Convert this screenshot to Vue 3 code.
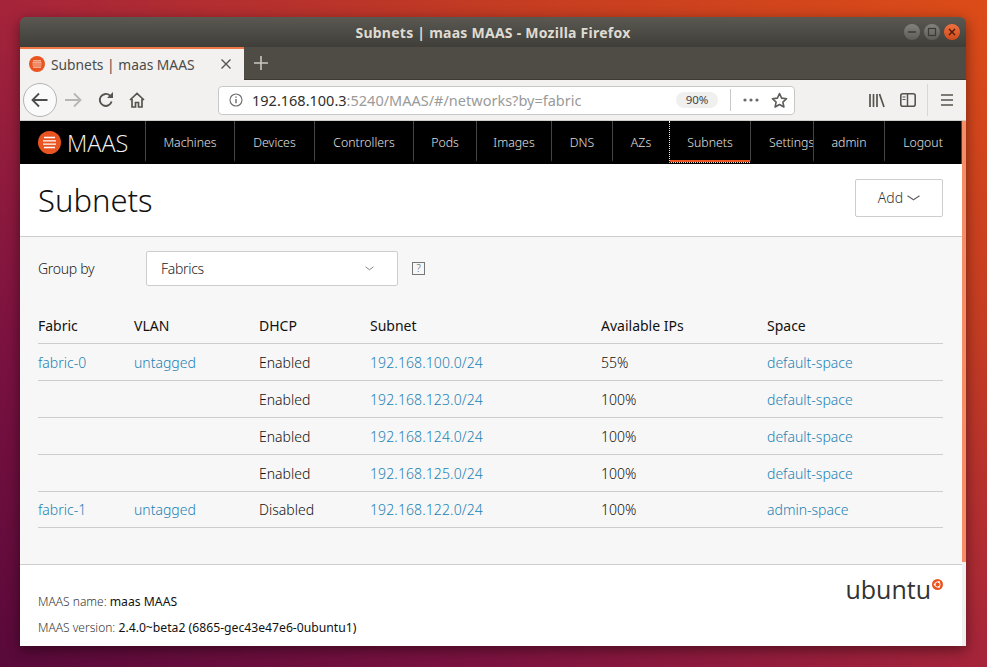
<template>
  <div class="desktop">
    <div class="window">
      <div class="titlebar">
        <span class="title">Subnets | maas MAAS - Mozilla Firefox</span>
        <div class="win-buttons">
          <span class="win-btn"><svg width="10" height="10" viewBox="0 0 10 10"><path d="M1 5h8" stroke="#3c3b37" stroke-width="1.4" /></svg></span>
          <span class="win-btn"><svg width="10" height="10" viewBox="0 0 10 10"><rect x="1.5" y="1.5" width="7" height="7" fill="none" stroke="#3c3b37" stroke-width="1.2" /></svg></span>
          <span class="win-btn close"><svg width="10" height="10" viewBox="0 0 10 10"><path d="M2 2l6 6M8 2l-6 6" stroke="#4a1a08" stroke-width="1.4" /></svg></span>
        </div>
      </div>

      <div class="tabbar">
        <div class="tab">
          <svg class="favicon" width="16" height="16" viewBox="0 0 16 16">
            <circle cx="8" cy="8" r="8" fill="#e95420" />
            <path d="M4 4.8h8M3.5 6.9h9M3.5 9h9M4 11.1h8" stroke="#f6c3ae" stroke-width="1.2" />
          </svg>
          <span class="tab-label">Subnets | maas MAAS</span>
          <svg class="tab-close" width="10" height="10" viewBox="0 0 10 10"><path d="M0.5 0.5l9 9M9.5 0.5l-9 9" stroke="#55544f" stroke-width="1.4" /></svg>
        </div>
        <svg class="new-tab" width="14" height="14" viewBox="0 0 14 14"><path d="M7 0v14M0 7h14" stroke="#c9c8c3" stroke-width="1.6" /></svg>
      </div>

      <div class="toolbar">
        <span class="back">
          <svg width="18" height="16" viewBox="0 0 18 16"><path d="M1.5 8h15M8 1.5L1.5 8 8 14.5" fill="none" stroke="#4d4d4d" stroke-width="1.8" /></svg>
        </span>
        <svg class="forward" width="18" height="16" viewBox="0 0 18 16"><path d="M1 8h15M10 1.5L16.5 8 10 14.5" fill="none" stroke="#b5b5b3" stroke-width="1.8" /></svg>
        <svg class="reload" width="16" height="16" viewBox="0 0 16 16"><path d="M13.6 9.5A6 6 0 1 1 12 3.6" fill="none" stroke="#55554f" stroke-width="1.9" /><path d="M9 6h6V0z" fill="#55554f" /></svg>
        <svg class="home" width="16" height="16" viewBox="0 0 16 16"><path d="M1 8l7-6.5L15 8M3 7v8h3.5v-4.500h3V15H13V7" fill="none" stroke="#55554f" stroke-width="1.7" /></svg>

        <div class="urlbar">
          <svg width="14" height="14" viewBox="0 0 14 14"><circle cx="7" cy="7" r="6" fill="none" stroke="#6a6a68" stroke-width="1.1" /><path d="M7 6v4.200M7 3.400v1.400" stroke="#6a6a68" stroke-width="1.4" /></svg>
          <span class="url"><span class="host">192.168.100.3</span>:5240/MAAS/#/networks?by=fabric</span>
          <span class="zoom">90%</span>
          <span class="url-sep"></span>
          <svg class="dots" width="16" height="4" viewBox="0 0 16 4"><circle cx="2" cy="2" r="1.600" fill="#6a6a68" /><circle cx="8" cy="2" r="1.600" fill="#6a6a68" /><circle cx="14" cy="2" r="1.600" fill="#6a6a68" /></svg>
          <svg class="star" width="17" height="16" viewBox="0 0 17 16"><path d="M8.500 1.500l2.100 4.600 5 .6-3.700 3.400 1 4.900-4.400-2.500-4.400 2.500 1-4.900L1.400 6.700l5-.6z" fill="none" stroke="#5c5c5a" stroke-width="1.600" stroke-linejoin="round" /></svg>
        </div>

        <svg class="library" width="16" height="15" viewBox="0 0 16 15"><path d="M1 1v13M4.500 1v13M8 1v13M10.500 1l4.500 13" stroke="#55554f" stroke-width="1.700" fill="none" /></svg>
        <svg class="sidebar" width="16" height="14" viewBox="0 0 16 14"><rect x="0.800" y="0.800" width="14.400" height="12.400" rx="2" fill="none" stroke="#55554f" stroke-width="1.600" /><path d="M7.500 1v12" stroke="#55554f" stroke-width="1.500" /><path d="M2.500 4h3M2.500 6.500h3" stroke="#55554f" stroke-width="1.200" /></svg>
        <span class="tool-sep"></span>
        <svg class="menu" width="12" height="12" viewBox="0 0 12 12"><path d="M0 1h12M0 6h12M0 11h12" stroke="#55554f" stroke-width="1.600" /></svg>
      </div>

      <div class="page-wrap">
        <div class="page">
          <nav class="nav">
            <div class="brand">
              <svg width="23" height="23" viewBox="0 0 23 23">
                <circle cx="11.500" cy="11.500" r="11.500" fill="#e95420" />
                <path d="M6 6.500h11M5 9.800h13M5 13.200h13M6 16.500h11" stroke="#fff" stroke-width="1.300" />
              </svg>
              <span class="brand-name">MAAS</span>
            </div>
            <a
              v-for="item in navItems"
              :key="item.label"
              class="nav-item"
              :class="{ active: item.label === 'Subnets', clipped: item.label === 'Settings' }"
              :style="{ width: item.width + 'px' }"
            >
              {{ item.label }}
            </a>
          </nav>

          <header class="page-header">
            <h1>Subnets</h1>
            <button class="add-btn">
              Add
              <svg width="13" height="6" viewBox="0 0 13 6"><path d="M0.500 0.800L6.500 4.800 12.500 0.800" fill="none" stroke="#666" stroke-width="1.200" /></svg>
            </button>
          </header>

          <main class="content">
            <div class="group-row">
              <label>Group by</label>
              <div class="select">
                <span>Fabrics</span>
                <svg width="9" height="5" viewBox="0 0 9 5"><path d="M0.500 0.800L4.500 3.800 8.500 0.800" fill="none" stroke="#888" stroke-width="1" /></svg>
              </div>
              <span class="help">?</span>
            </div>

            <div class="table">
              <div class="row head">
                <span>Fabric</span>
                <span>VLAN</span>
                <span>DHCP</span>
                <span>Subnet</span>
                <span>Available IPs</span>
                <span>Space</span>
              </div>
              <div v-for="row in rows" :key="row.subnet" class="row">
                <a>{{ row.fabric }}</a>
                <a>{{ row.vlan }}</a>
                <span>{{ row.dhcp }}</span>
                <a class="subnet">{{ row.subnet }}</a>
                <span>{{ row.ips }}</span>
                <a>{{ row.space }}</a>
              </div>
            </div>
          </main>

          <footer class="footer">
            <div class="footer-text">
              <p>MAAS name: <b>maas MAAS</b></p>
              <p>MAAS version: <b>2.4.0~beta2 (6865-gec43e47e6-0ubuntu1)</b></p>
            </div>
            <div class="ubuntu">
              <span>ubuntu</span>
              <svg width="11" height="11" viewBox="0 0 11 11">
                <circle cx="5.500" cy="5.500" r="5.500" fill="#e95420" />
                <circle cx="5.500" cy="5.500" r="2.600" fill="none" stroke="#fff" stroke-width="1" />
                <circle cx="2.600" cy="5.500" r="0.900" fill="#fff" />
                <circle cx="7" cy="3" r="0.900" fill="#fff" />
                <circle cx="7" cy="8" r="0.900" fill="#fff" />
              </svg>
            </div>
          </footer>
        </div>
        <div class="scrollbar"><div class="thumb"></div></div>
      </div>
    </div>
  </div>
</template>

<script setup>
const navItems = [
  { label: "Machines", width: 89 },
  { label: "Devices", width: 80 },
  { label: "Controllers", width: 99 },
  { label: "Pods", width: 63 },
  { label: "Images", width: 75 },
  { label: "DNS", width: 61 },
  { label: "AZs", width: 57 },
  { label: "Subnets", width: 81 },
  { label: "Settings", width: 63 },
  { label: "admin", width: 71 },
  { label: "Logout", width: 77 },
];

const rows = [
  { fabric: "fabric-0", vlan: "untagged", dhcp: "Enabled", subnet: "192.168.100.0/24", ips: "55%", space: "default-space" },
  { fabric: "", vlan: "", dhcp: "Enabled", subnet: "192.168.123.0/24", ips: "100%", space: "default-space" },
  { fabric: "", vlan: "", dhcp: "Enabled", subnet: "192.168.124.0/24", ips: "100%", space: "default-space" },
  { fabric: "", vlan: "", dhcp: "Enabled", subnet: "192.168.125.0/24", ips: "100%", space: "default-space" },
  { fabric: "fabric-1", vlan: "untagged", dhcp: "Disabled", subnet: "192.168.122.0/24", ips: "100%", space: "admin-space" },
];
</script>

<style>
html,
body {
  margin: 0;
  height: 100%;
  overflow: hidden;
}
</style>

<style scoped>
.desktop {
  width: 987px;
  height: 667px;
  padding: 17px 21px 21px 20px;
  box-sizing: border-box;
  background: linear-gradient(to top right, #58093a 0%, #7c1240 25%, #a5243a 50%, #c43c22 75%, #dc4c18 100%);
  font-family: "Noto Sans", "Open Sans", sans-serif;
}

.window {
  height: 629px;
  display: flex;
  flex-direction: column;
  border-radius: 6px 6px 0 0;
  overflow: hidden;
  box-shadow: 0 4px 14px rgba(0, 0, 0, 0.45);
}

.titlebar {
  height: 30px;
  flex: none;
  position: relative;
  display: flex;
  align-items: center;
  justify-content: center;
  background: linear-gradient(#5a5851, #3f3e39);
}

.title {
  color: #dfdbd2;
  font-size: 14px;
  font-weight: 700;
  letter-spacing: 0.25px;
}

.win-buttons {
  position: absolute;
  right: 6px;
  top: 7px;
  display: flex;
  gap: 4px;
}

.win-btn {
  width: 16px;
  height: 16px;
  border-radius: 50%;
  background: linear-gradient(#84827c, #5e5c56);
  display: flex;
  align-items: center;
  justify-content: center;
}

.win-btn.close {
  background: linear-gradient(#f0703f, #d04a1a);
}

.tabbar {
  height: 33px;
  flex: none;
  display: flex;
  align-items: center;
  background: #4f4c45;
  box-sizing: border-box;
  border-bottom: 1px solid #3c3a35;
}

.tab {
  width: 224px;
  height: 33px;
  box-sizing: border-box;
  border-top: 2px solid #f07746;
  background: #f2f1ef;
  display: flex;
  align-items: center;
  padding: 0 0 1px 9px;
  margin-bottom: -1px;
}

.tab-label {
  margin-left: 6px;
  font-size: 13.800px;
  color: #4b4b49;
  flex: 1;
  white-space: nowrap;
}

.tab-close {
  margin-right: 13px;
}

.new-tab {
  margin-left: 10px;
}

.toolbar {
  height: 41px;
  flex: none;
  box-sizing: border-box;
  display: flex;
  align-items: center;
  background: #f2f1ef;
  border-bottom: 1px solid #cfcecb;
  padding-left: 3px;
}

.back {
  width: 32px;
  height: 32px;
  border: 1px solid #b3b3b1;
  border-radius: 50%;
  background: #fafafa;
  display: flex;
  align-items: center;
  justify-content: center;
}

.forward {
  margin-left: 7px;
}

.reload {
  margin-left: 16px;
}

.home {
  margin-left: 15px;
}

.urlbar {
  margin-left: 73px;
  width: 577px;
  height: 29px;
  box-sizing: border-box;
  display: flex;
  align-items: center;
  padding: 0 6px 0 10px;
  background: #fff;
  border: 1px solid #c8c8c6;
  border-radius: 4px;
}

.url {
  margin-left: 9px;
  flex: 1;
  font-size: 14.500px;
  color: #9a9a98;
  white-space: nowrap;
}

.host {
  color: #2f2f2e;
}

.zoom {
  width: 42px;
  height: 16px;
  line-height: 16px;
  margin-right: 12px;
  border-radius: 8px;
  background: #f0f0ef;
  color: #444;
  font-size: 11.500px;
  text-align: center;
}

.url-sep {
  width: 1px;
  height: 22px;
  background: #c8c8c6;
  margin-right: 12px;
}

.star {
  margin-left: 12px;
}

.library {
  margin-left: 74px;
}

.sidebar {
  margin-left: 15px;
}

.tool-sep {
  width: 1px;
  height: 32px;
  background: #d8d7d4;
  margin-left: 11px;
}

.menu {
  margin-left: 13px;
}

.page-wrap {
  flex: 1;
  min-height: 0;
  display: flex;
}

.page {
  width: 942px;
  display: flex;
  flex-direction: column;
}

.scrollbar {
  flex: 1;
  background: #f0f0f0;
}

.thumb {
  height: 441px;
  background: #f58e66;
}

.nav {
  height: 43px;
  flex: none;
  display: flex;
  background: #000;
  border-right: 1px solid #444;
  box-sizing: border-box;
}

.brand {
  width: 125px;
  flex: none;
  display: flex;
  align-items: center;
  padding-left: 18px;
  gap: 6px;
  box-sizing: border-box;
}

.brand-name {
  color: #f2f2f2;
  font-size: 23.500px;
  font-weight: 300;
  font-family: "Open Sans", sans-serif;
}

.nav-item {
  flex: none;
  height: 41px;
  box-sizing: border-box;
  padding-top: 4px;
  border-left: 1px solid #444;
  border-bottom: 2px solid transparent;
  color: #e0e0e0;
  font-size: 12.300px;
  font-weight: 300;
  display: flex;
  align-items: center;
  justify-content: center;
  white-space: nowrap;
}

.nav-item.active {
  height: 42px;
  padding-bottom: 2px;
  border-left: 1px dotted #eee;
  border-bottom: 1px dotted #ddd;
  box-shadow: inset 0 -2px 0 #e95420;
}

.nav-item.clipped {
  justify-content: flex-start;
  padding-left: 18px;
  overflow: hidden;
}

.page-header {
  height: 72px;
  flex: none;
  background: #fff;
  display: flex;
  align-items: center;
  justify-content: space-between;
  padding: 0 19px 0 18px;
  border-bottom: 1px solid #cdcdcd;
}

h1 {
  margin: 0 0 1px;
  font-size: 31px;
  font-weight: 300;
  color: #111;
}

.add-btn {
  width: 88px;
  height: 38px;
  margin-bottom: 5px;
  background: #fff;
  border: 1px solid #cdcdcd;
  border-radius: 2px;
  color: #333;
  font: 300 14px "Noto Sans", sans-serif;
  display: flex;
  align-items: center;
  justify-content: center;
  gap: 4px;
}

.content {
  flex: 1;
  background: #f7f7f7;
  padding: 14px 19px 0 18px;
}

.group-row {
  display: flex;
  align-items: center;
  font-size: 14px;
  letter-spacing: -0.3px;
  color: #222;
  font-weight: 300;
}

.group-row label {
  width: 108px;
}

.select {
  width: 252px;
  height: 35px;
  box-sizing: border-box;
  padding: 0 23px 0 14px;
  background: #fff;
  border: 1px solid #cdcdcd;
  border-radius: 2px;
  display: flex;
  align-items: center;
  justify-content: space-between;
}

.help {
  width: 13px;
  height: 13px;
  margin-left: 14px;
  box-sizing: border-box;
  border: 1px solid #777;
  color: #555;
  font-size: 10px;
  line-height: 11px;
  text-align: center;
}

.table {
  margin-top: 25px;
}

.row {
  height: 37px;
  box-sizing: border-box;
  display: grid;
  grid-template-columns: 96px 125px 111px 231px 166px 1fr;
  align-items: center;
  border-bottom: 1px solid #cdcdcd;
  font-size: 14px;
  font-weight: 300;
  color: #111;
}

.row:last-child {
  height: 36px;
}

.row.head {
  height: 33px;
  padding-bottom: 3px;
  font-weight: 400;
  color: #111;
}

.row a {
  color: #1b82b4;
}

.row .subnet {
  letter-spacing: 0.12px;
}

.footer {
  height: 82px;
  flex: none;
  background: #fff;
  border-top: 1px solid #cdcdcd;
  box-sizing: border-box;
  padding: 14px 19px 0 18px;
  display: flex;
  justify-content: space-between;
}

.footer-text {
  padding-top: 14px;
}

.footer-text p {
  margin: 0 0 8px;
  font-size: 12px;
  line-height: 18px;
  font-weight: 300;
  color: #333;
}

.footer-text b {
  font-size: 12.200px;
  font-weight: 400;
  color: #111;
}

.ubuntu {
  display: flex;
  align-items: flex-start;
  gap: 1px;
}

.ubuntu span {
  font-size: 25px;
  line-height: 26px;
  margin-top: -3px;
  color: #333;
  font-family: "Open Sans", sans-serif;
  font-weight: 400;
}
</style>
